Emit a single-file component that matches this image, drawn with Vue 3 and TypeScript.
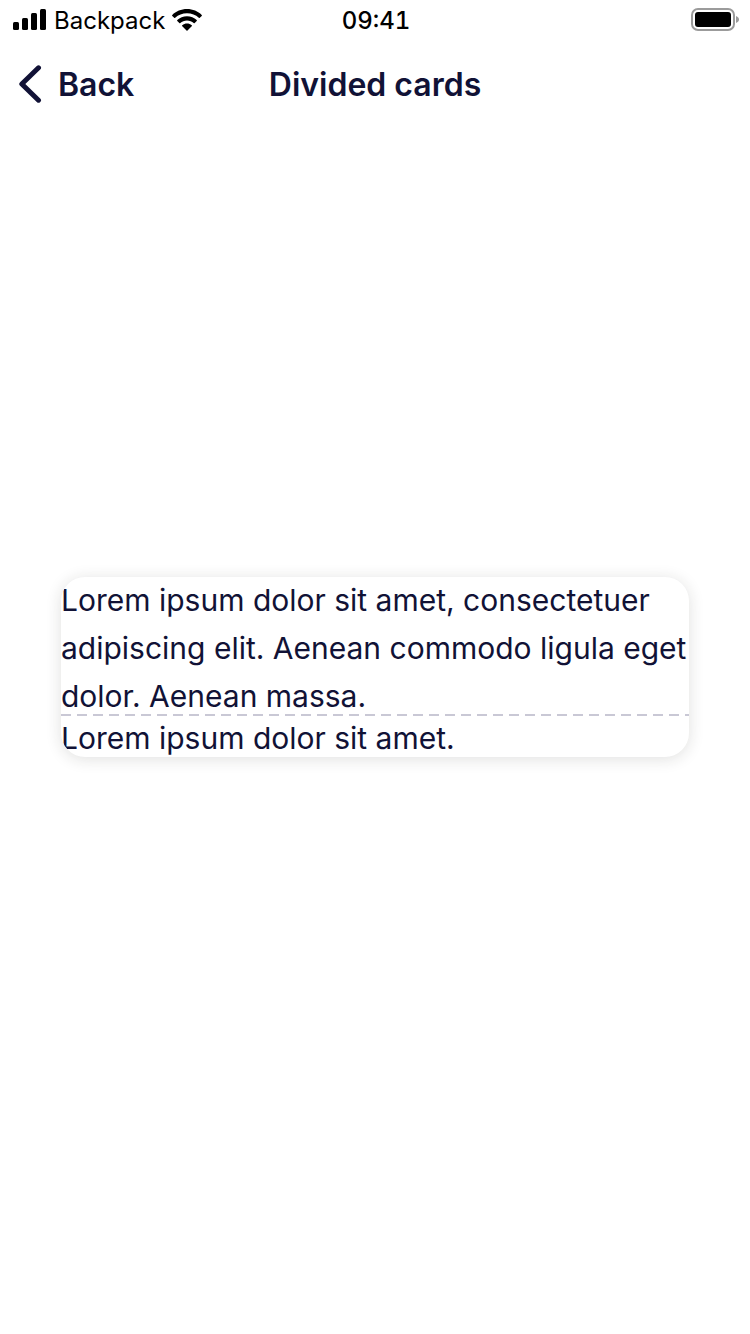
<script setup lang="ts">
const carrier = 'Backpack'
const time = '09:41'
const title = 'Divided cards'
const primaryText =
  'Lorem ipsum dolor sit amet, consectetuer adipiscing elit. Aenean commodo ligula eget dolor. Aenean massa.'
const secondaryText = 'Lorem ipsum dolor sit amet.'
</script>

<template>
  <div class="screen">
    <header class="top">
      <div class="status">
        <div class="status-left">
          <svg class="signal" viewBox="0 0 34 22" aria-hidden="true">
            <rect x="0" y="13" width="6" height="8" rx="1.5" />
            <rect x="9" y="9" width="6" height="12" rx="1.5" />
            <rect x="18" y="4" width="6" height="17" rx="1.5" />
            <rect x="27" y="0" width="6" height="21" rx="1.5" />
          </svg>
          <span class="carrier">{{ carrier }}</span>
          <svg class="wifi" viewBox="0 0 30 22" aria-hidden="true">
            <path d="M15 0C9.200 0 4 2.200 .3 5.900a.7.700 0 0 0 0 1l1.900 1.900a.7.700 0 0 0 1 0C6.300 5.800 10.400 4.200 15 4.200s8.700 1.600 11.800 4.600a.7.700 0 0 0 1 0l1.900-1.900a.7.700 0 0 0 0-1C26 2.200 20.800 0 15 0Z" />
            <path d="M15 7.300c-3.800 0-7.200 1.400-9.700 3.800a.7.700 0 0 0 0 1l2 2a.7.700 0 0 0 1 0c1.800-1.600 4.100-2.600 6.700-2.600s4.900 1 6.700 2.600a.7.700 0 0 0 1 0l2-2a.7.700 0 0 0 0-1c-2.500-2.400-5.900-3.800-9.700-3.800Z" />
            <path d="M15 14.600c-1.800 0-3.400.6-4.700 1.600a.7.700 0 0 0 0 1.100l4.200 4.200a.7.700 0 0 0 1 0l4.200-4.200a.7.700 0 0 0 0-1.100c-1.300-1-2.900-1.600-4.700-1.600Z" />
          </svg>
        </div>
        <span class="time">{{ time }}</span>
        <svg class="battery" viewBox="0 0 48 24" aria-hidden="true">
          <rect x="1" y="1" width="42" height="21" rx="6" fill="none" stroke="#9b9b9b" stroke-width="2" />
          <rect x="4" y="4" width="36" height="15" rx="3" />
          <path d="M45 8c2 .8 3 2 3 3.500S47 14.200 45 15Z" fill="#9b9b9b" />
        </svg>
      </div>
      <nav class="nav">
        <button class="back" type="button">
          <svg class="chevron" viewBox="0 0 24 40" aria-hidden="true">
            <path d="M20.500 2.800 3.800 19 20.500 35.200" />
          </svg>
          <span>Back</span>
        </button>
        <h1 class="title">{{ title }}</h1>
      </nav>
    </header>

    <main class="card">
      <p class="primary">{{ primaryText }}</p>
      <div class="divider" role="separator"></div>
      <p class="secondary">{{ secondaryText }}</p>
    </main>
  </div>
</template>

<style>
body {
  margin: 0;
  background: #fff;
}
</style>

<style scoped>
.screen {
  display: grid;
  grid-template-rows: 1fr auto 1fr;
  min-height: 100vh;
  background: #fff;
  color: #111236;
  font-family: Inter, "Liberation Sans", sans-serif;
}

.status {
  display: grid;
  grid-template-columns: 1fr auto 1fr;
  align-items: center;
  height: 40px;
  padding: 0 11px 0 13px;
  color: #000;
  font-size: 24px;
  line-height: 38px;
}

.status-left {
  display: flex;
  align-items: center;
}

.signal {
  width: 34px;
  height: 22px;
}

.carrier {
  margin: 0 7px;
  padding-top: 2px;
}

.wifi {
  width: 30px;
  height: 22px;
}

.time {
  padding-top: 2px;
  font-weight: 500;
  font-variant-numeric: tabular-nums;
}

.battery {
  justify-self: end;
  width: 48px;
  height: 24px;
}

.nav {
  display: grid;
  grid-template-columns: 1fr auto 1fr;
  align-items: center;
  height: 90px;
  padding: 0 18px;
}

.back {
  display: flex;
  align-items: center;
  justify-self: start;
  gap: 16px;
  padding: 0;
  border: 0;
  background: none;
  color: inherit;
  font: inherit;
  font-size: 32px;
  font-weight: 600;
  line-height: 40px;
}

.chevron {
  width: 24px;
  height: 40px;
  fill: none;
  stroke: currentColor;
  stroke-width: 5;
  stroke-linecap: round;
  stroke-linejoin: round;
}

.title {
  margin: 0;
  font-size: 32px;
  font-weight: 600;
  line-height: 40px;
}

.card {
  margin: 0 61px;
  overflow: hidden;
  border-radius: 24px;
  background: #fff;
  box-shadow: 0 2px 16px rgba(37, 32, 31, 0.14);
  font-size: 30px;
}

.primary {
  margin: -1px 0 -6px;
  line-height: 48px;
}

.divider {
  height: 2px;
  background: repeating-linear-gradient(90deg, #c9c8d5 0 10px, transparent 10px 16px);
}

.secondary {
  margin: 0 0 -3px;
  line-height: 44px;
}
</style>
